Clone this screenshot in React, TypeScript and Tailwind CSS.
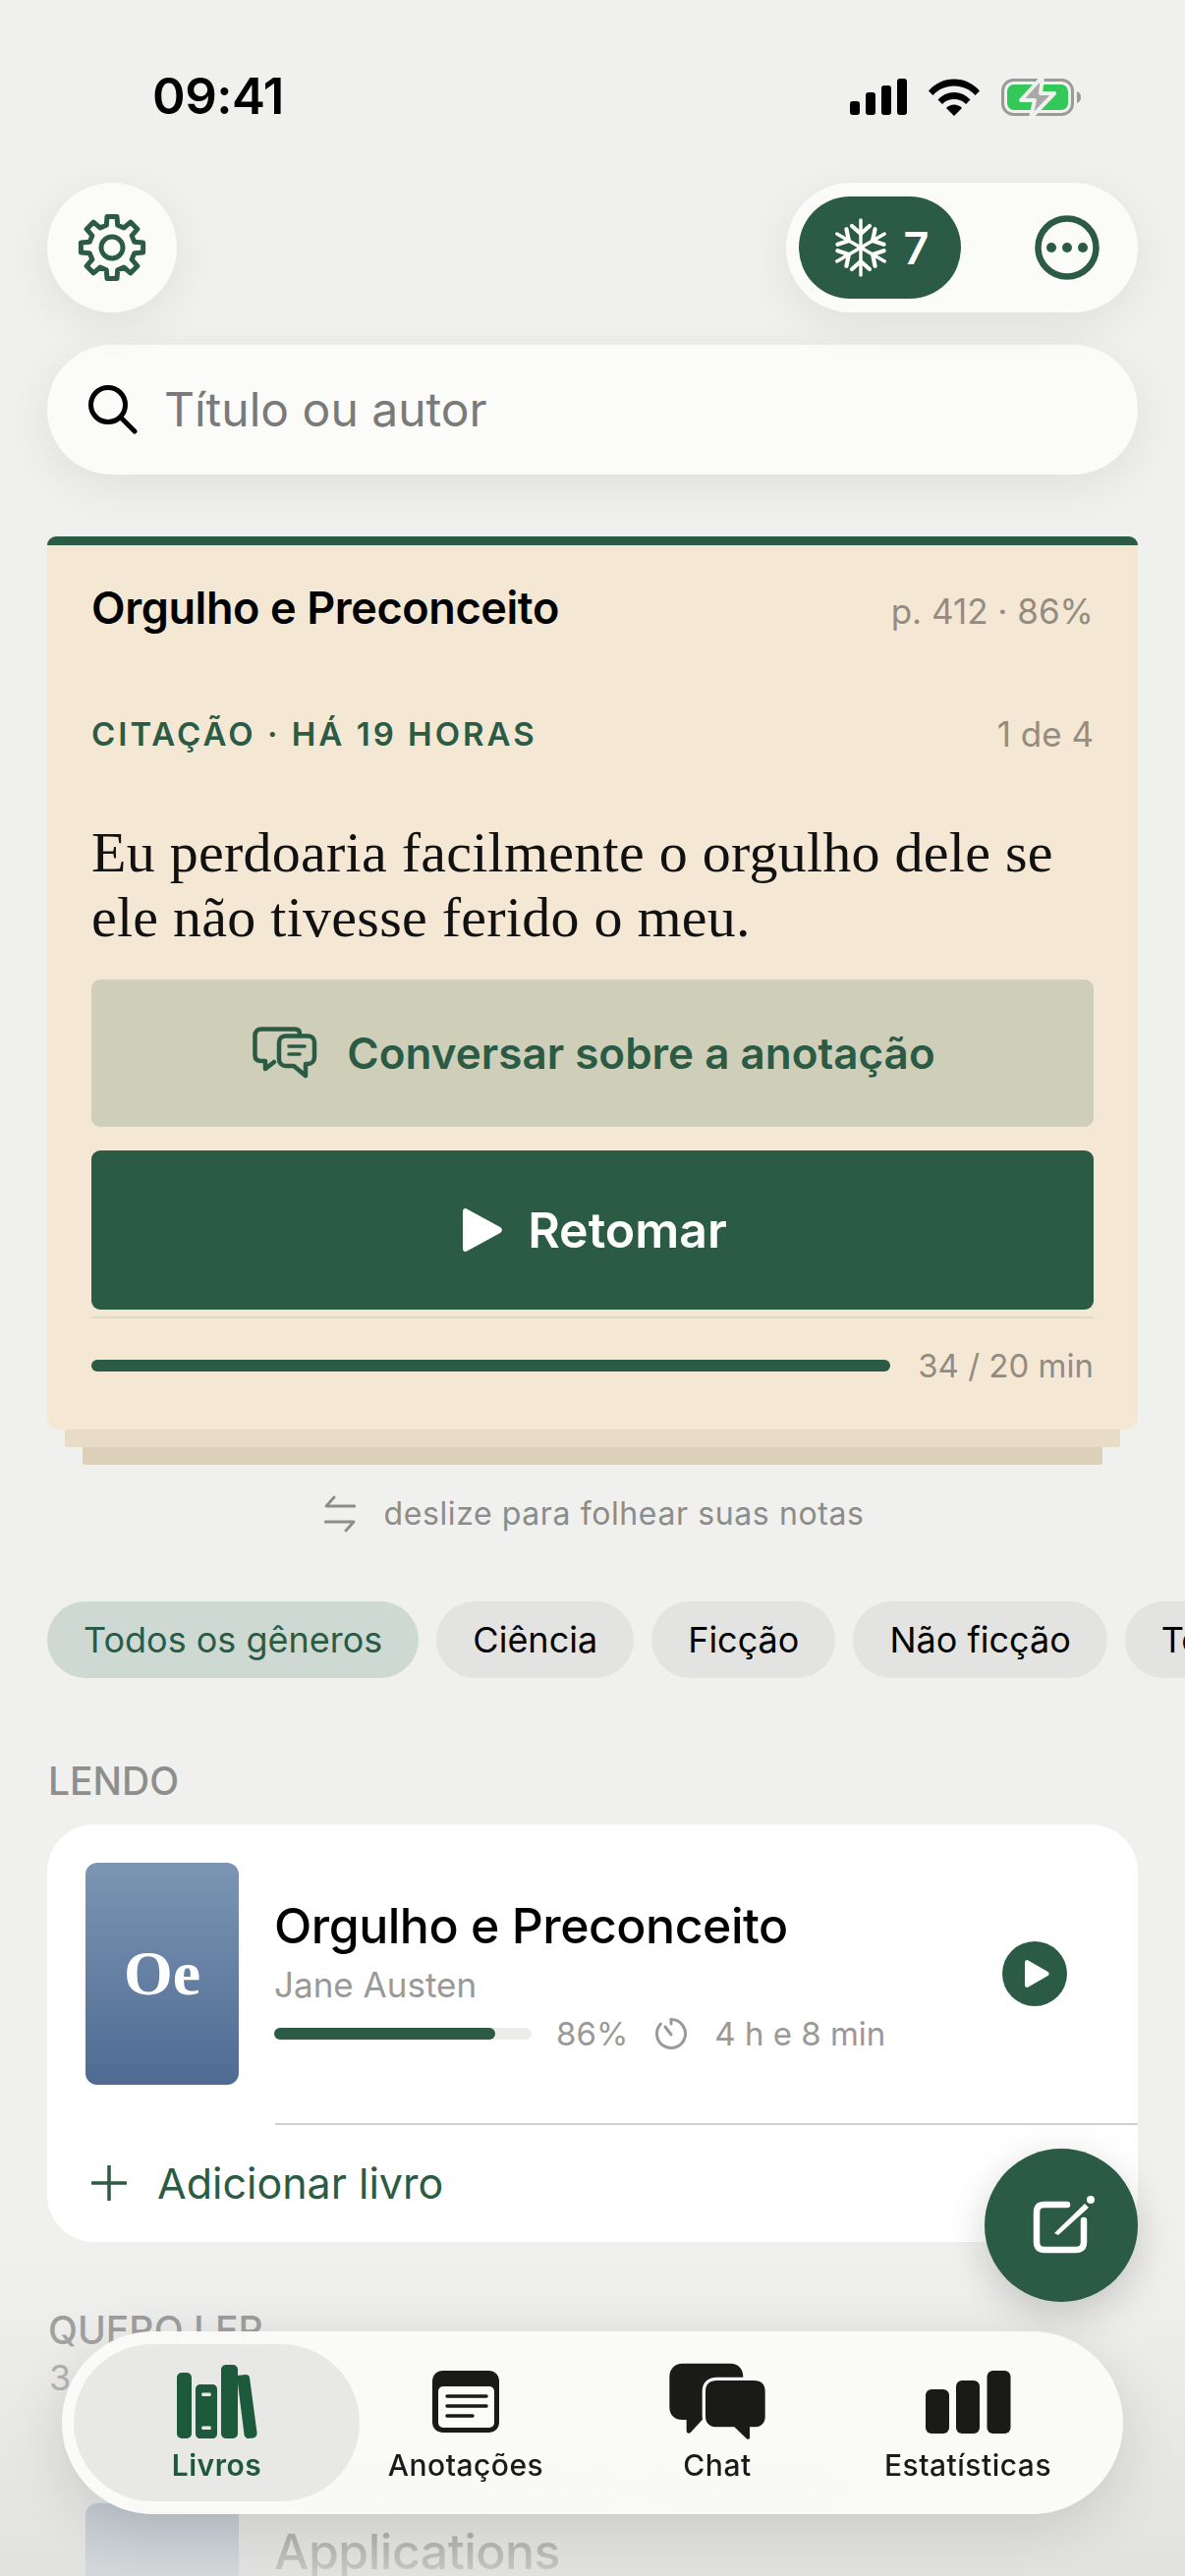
const GREEN = '#2b5b45';

// 8 tooth gear outline, radii in px around 40,40
function gearPath() {
  const pts: string[] = [];
  for (let i = 0; i < 8; i++) {
    const a = -90 + i * 45;
    const list: [number, number][] = [
      [a - 14, 23.5],
      [a - 9, 32],
      [a + 9, 32],
      [a + 14, 23.5],
    ];
    list.forEach(([deg, r]) => {
      const t = (deg * Math.PI) / 180;
      pts.push(`${(40 + r * Math.cos(t)).toFixed(2)} ${(40 + r * Math.sin(t)).toFixed(2)}`);
    });
  }
  return `M${pts.join('L')}Z`;
}

function StatusIcons() {
  return (
    <div className="flex items-center mt-[4px]">
      <svg width="60" height="38" viewBox="0 0 60 38" fill="#000">
        <rect x="0" y="23" width="10" height="14" rx="3" />
        <rect x="16" y="14" width="10" height="23" rx="3" />
        <rect x="32" y="7" width="10" height="30" rx="3" />
        <rect x="48" y="0" width="10" height="37" rx="3" />
      </svg>
      <svg className="ml-[20px]" width="52" height="38" viewBox="0 0 52 38" fill="#000">
        <path d="M0 12.5C6.5 5 15.5 0.5 26 0.5S45.500 5 52 12.5L47.500 17C42 11 34.500 7.500 26 7.500S10 11 4.500 17Z" />
        <path d="M9.500 21.500C13.500 17 19.500 14 26 14S38.500 17 42.500 21.500L38 26C35 22.800 30.800 21 26 21S17 22.800 14 26Z" />
        <path d="M18 30C20 28 23 26.500 26 26.500S32 28 34 30L26 38Z" />
      </svg>
      <svg className="ml-[22px]" width="84" height="42" viewBox="0 0 84 42">
        <rect x="1.500" y="3.500" width="71" height="35" rx="11" fill="none" stroke="#9a9a98" strokeWidth="3" />
        <rect x="6" y="8" width="62" height="26" rx="7" fill="#34c759" />
        <path d="M77 15C80 16 81 18 81 21S80 26 77 27Z" fill="#9a9a98" />
        <path d="M42 0L20 24H34L30 42L54 17H40Z" fill="#a8a8a6" stroke="#f0f0ee" strokeWidth="4" strokeLinejoin="round" />
      </svg>
    </div>
  );
}

function SnowflakeIcon() {
  return (
    <svg width="60" height="60" viewBox="0 0 60 60" fill="none" stroke="#fff" strokeWidth="4.200" strokeLinecap="round" strokeLinejoin="round">
      {[0, 60, 120, 180, 240, 300].map((deg) => (
        <g key={deg} transform={`rotate(${deg} 30 30)`}>
          <path d="M30 30V2" strokeWidth="3.400" />
          <path d="M21 8L30 16L39 8" />
        </g>
      ))}
    </svg>
  );
}

function ChatOutlineIcon() {
  return (
    <svg width="66" height="54" viewBox="0 0 66 54" fill="none" stroke={GREEN} strokeWidth="4.500" strokeLinejoin="round" strokeLinecap="round">
      <path d="M48 8V7C48 4 46 2.500 43 2.500H9C5 2.500 2.500 5 2.500 9V29C2.500 33 5 35 9 35H13V43L22 36" />
      <path d="M34 9.500H56C60 9.500 63 12 63 16V31C63 35 60 38 56 38H54V50L42 40H34C30 40 27 37 27 33V16C27 12 30 9.500 34 9.500Z" />
      <path d="M37 20H53M37 28H48" strokeWidth="3.500" />
    </svg>
  );
}

function BooksIcon() {
  return (
    <svg width="82" height="75" viewBox="0 0 82 75" fill="#1d5a3c">
      <rect x="0" y="8" width="15" height="67" rx="5" />
      <path fillRule="evenodd" d="M24 20H36C39 20 41 22 41 25V70C41 73 39 75 36 75H24C21 75 19 73 19 70V25C19 22 21 20 24 20ZM26 28.500C25 28.500 25 32 26 32H34C35 32 35 28.500 34 28.500ZM26 62.500C25 62.500 25 66 26 66H34C35 66 35 62.500 34 62.500Z" />
      <rect x="45" y="0" width="17" height="75" rx="5" />
      <path d="M61 11L70 10C72 10 74 11 74 13L81.500 69C82 72 80 74 78 74.500L73 75C70 75 69 73 68.500 71L61 11Z" />
    </svg>
  );
}

function NotesIcon() {
  return (
    <svg width="68" height="63" viewBox="0 0 68 63">
      <rect x="0" y="0" width="68" height="63" rx="10" fill="#1a1a18" />
      <rect x="6" y="16" width="57" height="42" rx="5" fill="#fbfbf9" />
      <path d="M15 26H55M15 36H55M15 46H41" stroke="#1a1a18" strokeWidth="3.500" strokeLinecap="round" />
    </svg>
  );
}

function ChatIcon() {
  return (
    <svg width="104" height="84" viewBox="150 70 312 252">
      <path d="M200 78H345C372 78 385 95 385 120V210C385 235 370 250 345 250H260L225 288C218 294 212 290 212 282V250H200C175 250 160 235 160 210V120C160 95 175 78 200 78Z" fill="#1a1a18" />
      <path d="M305 120H418C446 120 462 136 462 162V240C462 266 446 282 418 282H415V305C415 315 404 318 396 311L360 282H305C277 282 260 266 260 240V162C260 136 277 120 305 120Z" fill="#fbfbf9" />
      <path d="M305 130H418C440 130 452 142 452 162V240C452 260 440 272 418 272H405V303C405 310 400 312 394 306L358 272H305C283 272 270 260 270 240V162C270 142 283 130 305 130Z" fill="#1a1a18" />
    </svg>
  );
}

function StatsIcon() {
  return (
    <svg width="87" height="64" viewBox="0 0 87 64" fill="#1a1a18">
      <rect x="0" y="19" width="24" height="45" rx="6" />
      <rect x="31" y="10" width="24" height="54" rx="6" />
      <rect x="62.500" y="0" width="24" height="64" rx="6" />
    </svg>
  );
}

const chips = ['Ciência', 'Ficção', 'Não ficção', 'Tecnologia'];

export default function App() {
  return (
    <div className="relative w-[1206px] h-[2622px] overflow-hidden bg-[#f0f0ee] font-['Inter',sans-serif] text-black">
      {/* status bar */}
      <div className="flex items-center justify-between h-[62px] mt-[66px] pl-[155px] pr-[103px] pt-0">
        <span className="text-[51px] font-semibold leading-none tracking-[-0.5px]">09:41</span>
        <StatusIcons />
      </div>

      <div className="px-[48px] mt-[58px]">
        <div className="flex justify-between">
          <div className="flex items-center justify-center w-[132px] h-[132px] rounded-full bg-[#fbfbf9] shadow-[0_12px_48px_rgba(0,0,0,0.07)]">
            <svg width="80" height="80" viewBox="0 0 80 80" fill="none" stroke={GREEN} strokeWidth="5" strokeLinejoin="round">
              <path d={gearPath()} />
              <circle cx="40" cy="40" r="11" />
            </svg>
          </div>
          <div className="flex items-center w-[358px] h-[132px] rounded-full bg-[#fbfbf9] pl-[13px] shadow-[0_12px_48px_rgba(0,0,0,0.07)]">
            <div className="flex items-center justify-center gap-[14px] w-[165px] h-[104px] rounded-full bg-[#2b5b45] text-white">
              <SnowflakeIcon />
              <span className="text-[45px] font-semibold leading-none">7</span>
            </div>
            <svg className="ml-[75px]" width="66" height="66" viewBox="0 0 66 66">
              <circle cx="33" cy="33" r="29.500" fill="none" stroke={GREEN} strokeWidth="6.500" />
              <circle cx="17" cy="33" r="5" fill={GREEN} />
              <circle cx="33" cy="33" r="5" fill={GREEN} />
              <circle cx="49" cy="33" r="5" fill={GREEN} />
            </svg>
          </div>
        </div>

        <div className="flex items-center h-[132px] mt-[33px] pl-[42px] rounded-full bg-[#fbfbf9] shadow-[0_12px_48px_rgba(0,0,0,0.07)]">
          <svg width="50" height="50" viewBox="0 0 50 50" fill="none" stroke="#000" strokeWidth="5" strokeLinecap="round">
            <circle cx="20" cy="20" r="17.500" />
            <path d="M33 33L47 47" />
          </svg>
          <span className="ml-[27px] text-[48px] leading-none text-[#7a7a78]">Título ou autor</span>
        </div>

        {/* note card */}
        <div className="mt-[63px] rounded-t-[9px] rounded-b-[12px] border-t-[9px] border-[#2b5b45] bg-[#f4e8d4] h-[909px] px-[45px] pt-[42px]">
          <div className="flex items-center justify-between h-[42px]">
            <span className="text-[45px] font-semibold leading-none tracking-[-0.4px]">Orgulho e Preconceito</span>
            <span className="text-[35px] leading-none text-[#948c80] mt-[8px]">p. 412 · 86%</span>
          </div>
          <div className="flex items-center justify-between h-[40px] mt-[88px]">
            <span className="text-[33px] font-semibold leading-none tracking-[3px] text-[#2b5b45]">CITAÇÃO · HÁ 19 HORAS</span>
            <span className="text-[35px] leading-none text-[#948c80]">1 de 4</span>
          </div>
          <p className="mt-[68px] text-[58px] leading-[66px] tracking-[0.25px] font-['Liberation_Serif',serif] text-[#111]">
            Eu perdoaria facilmente o orgulho dele se
            <br />
            ele não tivesse ferido o meu.
          </p>
          <div className="flex items-center justify-center gap-[30px] h-[150px] mt-[30px] pl-[3px] rounded-[9px] bg-[#cfcfb9] text-[#2b5b45]">
            <ChatOutlineIcon />
            <span className="text-[44px] font-semibold leading-none">Conversar sobre a anotação</span>
          </div>
          <div className="flex items-center justify-center gap-[26px] h-[162px] mt-[24px] pl-[5px] rounded-[9px] bg-[#2b5b45] text-white">
            <svg width="40" height="44" viewBox="0 0 40 44" fill="#fff">
              <path d="M0 3C0 0.500 2.500 -0.800 4.500 0.700L38 19C40.500 20.500 40.500 23.500 38 25L4.500 43.300C2.500 44.800 0 43.500 0 41Z" />
            </svg>
            <span className="text-[50px] font-semibold leading-none">Retomar</span>
          </div>
          <div className="h-[2px] mt-[7px] bg-[#e2d8c4]" />
          <div className="flex items-center justify-between mt-[28px] h-[40px]">
            <div className="w-[813px] h-[12px] rounded-full bg-[#2b5b45]" />
            <span className="text-[33px] leading-none text-[#948c80]">34 / 20 min</span>
          </div>
        </div>
        <div className="mx-[18px] h-[18px] bg-[#e8dcc6] rounded-b-[3px]" />
        <div className="mx-[36px] h-[18px] bg-[#ddd1bb] rounded-b-[3px]" />

        <div className="flex items-center justify-center gap-[29px] h-[40px] mt-[30px] ml-[3px] text-[#8c8c8a]">
          <svg width="32" height="38" viewBox="0 0 32 38" fill="none" stroke="#8c8c8a" strokeWidth="2.800" strokeLinecap="round" strokeLinejoin="round">
            <path d="M31 11H2M10 2L2 11" />
            <path d="M1 27H30M22 36L30 27" />
          </svg>
          <span className="text-[32px] leading-none tracking-[0.6px]">deslize para folhear suas notas</span>
        </div>

        <div className="flex gap-[18px] mt-[69px]">
          <div className="flex items-center h-[78px] shrink-0 px-[37px] rounded-full bg-[#cfd9d4] text-[#2b5b45] text-[36px] leading-none">
            Todos os gêneros
          </div>
          {chips.map((chip) => (
            <div key={chip} className="flex items-center h-[78px] shrink-0 px-[37px] rounded-full bg-[#e3e4e2] text-[36px] leading-none">
              {chip}
            </div>
          ))}
        </div>

        {/* reading */}
        <div className="flex items-center h-[40px] mt-[84px] pl-[1px] text-[39px] font-medium leading-none text-[#8e8e8c]">LENDO</div>
        <div className="mt-[25px] h-[425px] rounded-[48px] bg-white">
          <div className="flex h-[304px] pl-[39px]">
            <div className="flex items-center justify-center w-[156px] h-[226px] mt-[39px] rounded-[12px] bg-gradient-to-b from-[#7c95b4] to-[#4f6b92] text-white text-[64px] font-bold leading-none font-['Liberation_Serif',serif]">
              Oe
            </div>
            <div className="ml-[36px] mt-[73px]">
              <div className="h-[60px] text-[50px] font-medium leading-[60px] tracking-[-0.5px]">Orgulho e Preconceito</div>
              <div className="h-[40px] mt-[10px] text-[35px] leading-[40px] text-[#999997]">Jane Austen</div>
              <div className="flex items-center h-[40px] mt-[10px] text-[33px] leading-none text-[#999997]">
                <div className="w-[262px] h-[12px] rounded-full bg-[#ececea]">
                  <div className="w-[225px] h-[12px] rounded-full bg-[#2b5b45]" />
                </div>
                <span className="ml-[25px]">86%</span>
                <svg className="ml-[27px]" width="34" height="34" viewBox="0 0 34 34" fill="none" stroke="#999997" strokeWidth="3" strokeLinecap="round">
                  <path d="M17 2.500A14.500 14.500 0 1 1 6.500 7" />
                  <path d="M11 10L17 18" />
                  <path d="M17 2.500V7" />
                </svg>
                <span className="ml-[27px]">4 h e 8 min</span>
              </div>
            </div>
            <div className="flex items-center justify-center w-[66px] h-[66px] ml-auto mr-[72px] mt-[119px] rounded-full bg-[#2b5b45]">
              <svg className="ml-[5px]" width="25" height="28" viewBox="0 0 25 28" fill="#fff">
                <path d="M0 2.500C0 0.500 2 -0.600 3.500 0.400L23.500 12C25 13 25 15 23.500 16L3.500 27.600C2 28.600 0 27.500 0 25.500Z" />
              </svg>
            </div>
          </div>
          <div className="ml-[232px] h-[1.5px] bg-[#cfcfcd]" />
          <div className="flex items-center h-[119px] pl-[45px] text-[#2b5b45]">
            <svg width="36" height="36" viewBox="0 0 36 36" stroke={GREEN} strokeWidth="3.500" strokeLinecap="round">
              <path d="M18 1V35M1 18H35" />
            </svg>
            <span className="ml-[31px] text-[43px] leading-none">Adicionar livro</span>
          </div>
        </div>

        {/* want to read, mostly under the tab bar */}
        <div className="flex items-center h-[40px] mt-[69px] pl-[1px] text-[39px] font-medium leading-none text-[#8e8e8c]">QUERO LER</div>
        <div className="h-[40px] mt-[9px] pl-[2px] text-[36px] leading-[40px] text-[#999997]">3 livros</div>
        <div className="mt-[60px] h-[300px] flex pl-[39px]">
          <div className="w-[156px] h-[226px] mt-[48px] rounded-[12px] bg-gradient-to-b from-[#7c95b4] to-[#4f6b92]" />
          <div className="ml-[36px] -mt-[8px] text-[50px] font-medium leading-[70px] tracking-[-0.5px]">
            Designing Data-Intensive
            <br />
            Applications
          </div>
        </div>
      </div>

      {/* fade above the bottom of the screen */}
      <div className="absolute left-0 right-0 top-[2290px] h-[332px] bg-gradient-to-b from-[#e2e3e1]/0 to-[#e0e1df]/90" />

      <div className="absolute right-[48px] top-[2187px] flex items-center justify-center w-[156px] h-[156px] rounded-full bg-[#2b5b45] shadow-[0_12px_40px_rgba(0,0,0,0.18)]">
        <svg width="66" height="62" viewBox="0 0 66 62" fill="none" className="ml-[5px]">
          <path d="M36 10H13C7.500 10 5 12.500 5 18V48C5 53.500 7.500 56 13 56H45C50.500 56 53 53.500 53 48V26" stroke="#fff" strokeWidth="6.500" strokeLinecap="round" />
          <path d="M23 39L54 9L58 13L27 41Z" fill="#fff" />
          <circle cx="60" cy="5" r="4" fill="#fff" />
        </svg>
      </div>

      <div className="absolute left-[63px] top-[2373px] flex w-[1080px] h-[186px] items-center pl-[12px] rounded-full bg-[#fbfbf9]/95 backdrop-blur-[20px] shadow-[0_16px_60px_rgba(0,0,0,0.12)]">
        <div className="flex flex-col items-center w-[291px] h-[160px] pt-[21px] rounded-full bg-[#e8e9e6] text-[#1d5a3c]">
          <div className="h-[75px]"><BooksIcon /></div>
          <span className="mt-[7px] text-[30px] font-semibold leading-[40px] tracking-[0.5px]">Livros</span>
        </div>
        <div className="flex flex-col items-center w-[216px] h-[160px] pt-[21px] text-[#1a1a18]">
          <div className="flex items-end h-[75px] pb-[6px]"><NotesIcon /></div>
          <span className="mt-[7px] text-[30px] font-medium leading-[40px] tracking-[0.5px]">Anotações</span>
        </div>
        <div className="flex flex-col items-center w-[296px] h-[160px] pt-[17px] text-[#1a1a18]">
          <div className="h-[79px]"><ChatIcon /></div>
          <span className="mt-[7px] text-[30px] font-medium leading-[40px] tracking-[0.5px]">Chat</span>
        </div>
        <div className="flex flex-col items-center w-[214px] h-[160px] pt-[21px] text-[#1a1a18]">
          <div className="flex items-end h-[75px] pb-[5px]"><StatsIcon /></div>
          <span className="mt-[7px] text-[30px] font-medium leading-[40px] tracking-[0.5px]">Estatísticas</span>
        </div>
      </div>
    </div>
  );
}
